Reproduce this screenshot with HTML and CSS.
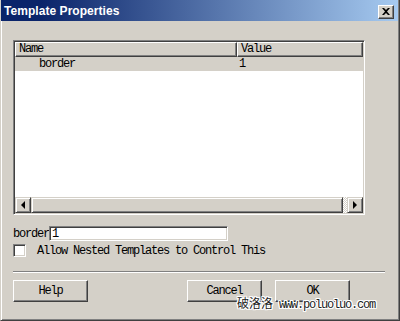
FILE: index.html
```html
<!DOCTYPE html>
<html lang="en">

<head>
  <meta charset="UTF-8">
  <title>Template Properties</title>
  <link rel="stylesheet" href="styles.css">
</head>

<body>
  <div class="window">
    <div class="titlebar">
      <span class="title">Template Properties</span>
      <button class="close-btn">
        <svg width="8" height="7" viewBox="0 0 8 7">
          <path d="M0 0h2l2 2 2-2h2L5 3.5 8 7H6L4 5 2 7H0l3-3.5z" fill="#000" />
        </svg>
      </button>
    </div>

    <div class="body">
      <div class="list">
        <div class="list-head">
          <div class="col col-name">Name</div>
          <div class="col col-value">Value</div>
        </div>
        <div class="list-rows">
          <div class="row">
            <span class="cell-name">border</span>
            <span class="cell-value">1</span>
          </div>
        </div>
        <div class="hscroll">
          <div class="sb-btn"><span class="arrow-left"></span></div>
          <div class="sb-thumb"></div>
          <div class="sb-track"></div>
          <div class="sb-btn"><span class="arrow-right"></span></div>
        </div>
      </div>

      <div class="field">
        <label class="field-label">border</label>
        <div class="field-input">1</div>
      </div>

      <div class="check-row">
        <span class="checkbox"></span>
        <span class="check-label">Allow Nested Templates to Control This</span>
      </div>

      <div class="separator"></div>

      <div class="buttons">
        <button class="btn">Help</button>
        <div class="btn-right">
          <button class="btn">Cancel</button>
          <button class="btn">OK</button>
        </div>
      </div>
    </div>

    <div class="watermark"><span class="wm-cn">破洛洛</span> <span class="wm-url">www.poluoluo.com</span></div>
  </div>
</body>

</html>
```

FILE: styles.css
```css
* {
  box-sizing: border-box;
}

body {
  margin: 0;
  padding: 0;
  background-color: #d4d0c8;
}

.window {
  position: relative;
  width: 400px;
  height: 321px;
  background-color: #d4d0c8;
  border-left: 1px solid #d4d0c8;
  border-right: 1px solid #404040;
  border-bottom: 1px solid #404040;
  box-shadow: inset 1px 0 #fff, inset -1px -1px #808080;
  font-family: "Liberation Mono", "DejaVu Sans Mono", monospace;
  font-size: 12px;
  letter-spacing: -1.2px;
  color: #000;
}

.titlebar {
  height: 21px;
  margin: 0 1px 0 0;
  display: flex;
  align-items: center;
  justify-content: space-between;
  padding: 0 4px 0 3px;
  background: linear-gradient(to right, #0a246a 10%, #a6caf0);
}

.title {
  font-family: "Liberation Sans", Arial, sans-serif;
  font-weight: bold;
  font-size: 12px;
  letter-spacing: 0.05px;
  color: #fff;
}

.close-btn {
  width: 16px;
  height: 14px;
  padding: 0;
  margin-top: 2px;
  display: flex;
  align-items: center;
  justify-content: center;
  background-color: #d4d0c8;
  border: 1px solid;
  border-color: #fff #404040 #404040 #fff;
  box-shadow: inset -1px -1px #808080;
}

.body {
  padding: 19px 0 0 12px;
}

/* list view */
.list {
  width: 352px;
  height: 175px;
  display: flex;
  flex-direction: column;
  border: 1px solid;
  border-color: #808080 #fff #fff #808080;
  box-shadow: inset 1px 1px #404040, inset -1px -1px #d4d0c8;
  padding: 1px;
}

.list-head {
  display: flex;
  height: 15px;
}

.col {
  height: 15px;
  line-height: 13px;
  padding-left: 3px;
  background-color: #d4d0c8;
  border: 1px solid;
  border-color: #fff #404040 #404040 #fff;
  box-shadow: inset -1px -1px #808080;
}

.col-name {
  width: 222px;
}

.col-value {
  flex: 1;
}

.list-rows {
  flex: 1;
  background-color: #fff;
}

.row {
  display: flex;
  height: 14px;
  line-height: 15px;
  background-color: #d4d0c8;
}

.cell-name {
  width: 222px;
  padding-left: 24px;
}

.cell-value {
  padding-left: 2px;
}

.hscroll {
  display: flex;
  height: 16px;
}

.sb-btn,
.sb-thumb {
  height: 16px;
  background-color: #d4d0c8;
  border: 1px solid;
  border-color: #d4d0c8 #404040 #404040 #d4d0c8;
  box-shadow: inset 1px 1px #fff, inset -1px -1px #808080;
}

.sb-btn {
  width: 16px;
  display: flex;
  align-items: center;
  justify-content: center;
}

.sb-thumb {
  width: 312px;
}

.sb-track {
  flex: 1;
  background: repeating-conic-gradient(#fff 0 25%, #d4d0c8 0 50%) 0 0 / 2px 2px;
}

.arrow-left {
  width: 0;
  height: 0;
  border-top: 4px solid transparent;
  border-bottom: 4px solid transparent;
  border-right: 4px solid #000;
}

.arrow-right {
  width: 0;
  height: 0;
  border-top: 4px solid transparent;
  border-bottom: 4px solid transparent;
  border-left: 4px solid #000;
}

/* field */
.field {
  display: flex;
  align-items: center;
  margin-top: 11px;
}

.field-label {
  width: 36px;
}

.field-input {
  width: 179px;
  height: 15px;
  line-height: 14px;
  padding-left: 2px;
  background-color: #fff;
  border: 1px solid;
  border-color: #808080 #fff #fff #808080;
  box-shadow: inset 1px 1px #404040, inset -1px -1px #d4d0c8;
}

.check-row {
  display: flex;
  align-items: center;
  margin-top: 3px;
  height: 13px;
}

.checkbox {
  width: 13px;
  height: 13px;
  background-color: #fff;
  border: 1px solid;
  border-color: #808080 #fff #fff #808080;
  box-shadow: inset 1px 1px #404040, inset -1px -1px #d4d0c8;
}

.check-label {
  margin-left: 11px;
}

.separator {
  width: 372px;
  margin-top: 14px;
  border-top: 1px solid #808080;
  border-bottom: 1px solid #fff;
}

.buttons {
  display: flex;
  justify-content: space-between;
  width: 337px;
  margin-top: 7px;
}

.btn-right {
  display: flex;
  gap: 13px;
}

.btn {
  width: 75px;
  height: 22px;
  padding: 0;
  font-family: inherit;
  font-size: 12px;
  letter-spacing: -1.2px;
  color: #000;
  background-color: #d4d0c8;
  border: 1px solid;
  border-color: #fff #404040 #404040 #fff;
  box-shadow: inset -1px -1px #808080;
}

.watermark {
  position: absolute;
  left: 236px;
  top: 294px;
  color: #222;
  white-space: nowrap;
  text-shadow: 1px 0 #fff, -1px 0 #fff, 0 1px #fff, 0 -1px #fff, 1px 1px #fff, -1px -1px #fff, 1px -1px #fff, -1px 1px #fff;
}

.wm-cn {
  font-family: "Noto Sans CJK SC", sans-serif;
  font-size: 12px;
  letter-spacing: 0;
}

.wm-url {
  font-size: 12px;
}
```
